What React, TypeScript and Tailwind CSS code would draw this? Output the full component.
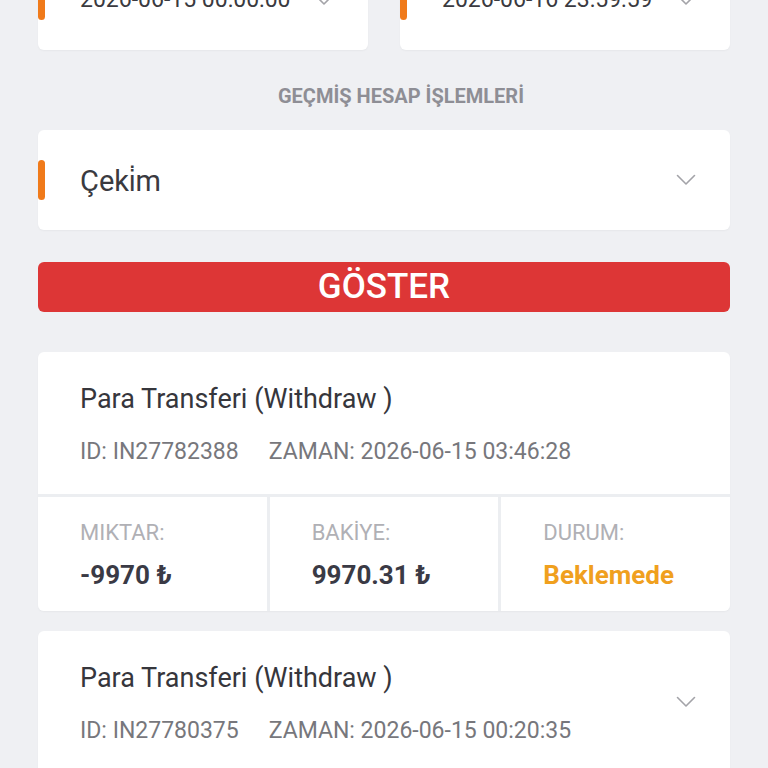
import React from 'react';

const Chevron = () => (
  <svg width="20" height="12" viewBox="0 0 20 12" fill="none">
    <polyline points="1.5,1.5 10,10 18.5,1.5" stroke="#a3a3a8" strokeWidth="1.6" strokeLinecap="round" strokeLinejoin="round" />
  </svg>
);

function SelectBox({ value, text = 'text-[29px] pt-[3px]' }: { value: string; text?: string }) {
  return (
    <div className="relative flex h-[100px] items-center rounded-[6px] bg-white pl-[42px] pr-[34px] shadow-[0_1px_2px_rgba(0,0,0,0.04)]">
      <span className="absolute left-0 top-[30px] h-[40px] w-[7px] rounded-[4px] bg-[#f07a1a]" />
      <span className={`flex-1 ${text} text-[#3a3a40]`}>{value}</span>
      <Chevron />
    </div>
  );
}

type Tx = {
  id: string;
  time: string;
  amount?: string;
  balance?: string;
  status?: string;
  open: boolean;
};

const TXS: Tx[] = [
  { id: 'IN27782388', time: '2026-06-15 03:46:28', amount: '-9970 ₺', balance: '9970.31 ₺', status: 'Beklemede', open: true },
  { id: 'IN27780375', time: '2026-06-15 00:20:35', open: false },
];

function TxCard({ tx }: { tx: Tx }) {
  return (
    <div className="overflow-hidden rounded-[6px] bg-white shadow-[0_1px_2px_rgba(0,0,0,0.04)]">
      <div className="flex h-[142px] items-center pl-[42px] pr-[34px]">
        <div className="flex-1 pt-[3px]">
          <p className="text-[27px] leading-[32px] text-[#36363c]">Para Transferi (Withdraw )</p>
          <p className="mt-[23px] flex gap-[30px] text-[23px] leading-[28px] text-[#77777c]">
            <span>ID: {tx.id}</span>
            <span>ZAMAN: {tx.time}</span>
          </p>
        </div>
        {!tx.open && <Chevron />}
      </div>
      {tx.open && (
        <div className="grid grid-cols-3 gap-[3px] border-t-[3px] border-[#eceef1] bg-[#eceef1]">
          <Cell label="MIKTAR:" value={tx.amount!} />
          <Cell label="BAKİYE:" value={tx.balance!} />
          <Cell label="DURUM:" value={tx.status!} color="text-[#f0a01e]" />
        </div>
      )}
    </div>
  );
}

function Cell({ label, value, color = 'text-[#3a3a45]' }: { label: string; value: string; color?: string }) {
  return (
    <div className="h-[114px] bg-white pl-[42px] pt-[22px]">
      <p className="text-[22px] leading-[28px] text-[#b0b0b5]">{label}</p>
      <p className={`mt-[13px] text-[26px] font-bold leading-[30px] ${color}`}>{value}</p>
    </div>
  );
}

export default function App() {
  return (
    <div className="h-[768px] overflow-hidden bg-[#eff0f3] px-[38px] font-['Roboto',sans-serif]">
      <div className="-mt-[50px]">
        {/* Tarih aralığı */}
        <div className="grid grid-cols-2 gap-[32px]">
          <SelectBox value="2026-06-15 00:00:00" text="text-[23px]" />
          <SelectBox value="2026-06-16 23:59:59" text="text-[23px]" />
        </div>

        <p className="mt-[36px] mb-[24px] pl-[34px] text-center text-[20px] font-bold leading-[20px] text-[#8e8e95]">
          GEÇMİŞ HESAP İŞLEMLERİ
        </p>

        <SelectBox value="Çeki̇m" />

        <button className="mt-[32px] flex h-[50px] w-full items-center justify-center rounded-[6px] bg-[#dd3636] text-[35px] font-medium text-white">
          GÖSTER
        </button>

        <div className="mt-[40px] flex flex-col gap-[20px]">
          {TXS.map((tx) => (
            <TxCard key={tx.id} tx={tx} />
          ))}
        </div>
      </div>
    </div>
  );
}
